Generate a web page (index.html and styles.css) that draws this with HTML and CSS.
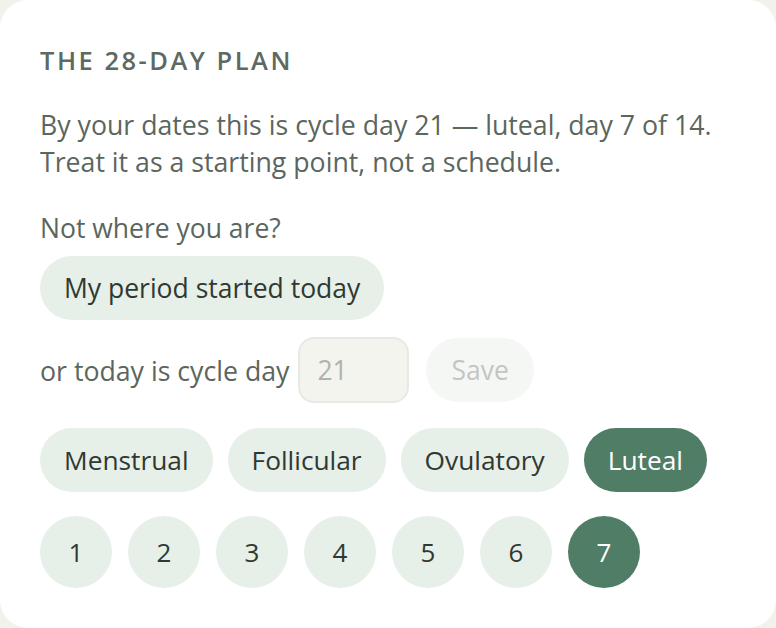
FILE: index.html
```html
<!DOCTYPE html>
<html lang="en">
  <head>
    <meta charset="UTF-8" />
    <meta name="viewport" content="width=device-width, initial-scale=1.0" />
    <title>The 28-day plan</title>
    <link rel="stylesheet" href="styles.css">
  </head>
  <body>
    <div class="plan-card">
      <h2>The 28-day plan</h2>
      <p class="intro">
        By your dates this is cycle day 21 — luteal, day 7 of 14.<br />
        Treat it as a starting point, not a schedule.
      </p>

      <div class="adjust">
        <div class="hint">Not where you are?</div>
        <button class="pill">My period started today</button>
        <div class="day-row">
          <label for="cycle-day">or today is cycle day</label>
          <input id="cycle-day" type="number" placeholder="21" />
          <button class="save" disabled>Save</button>
        </div>
      </div>

      <div class="phases">
        <button class="pill">Menstrual</button>
        <button class="pill">Follicular</button>
        <button class="pill">Ovulatory</button>
        <button class="pill active">Luteal</button>
      </div>

      <div class="days">
        <button class="day">1</button>
        <button class="day">2</button>
        <button class="day">3</button>
        <button class="day">4</button>
        <button class="day">5</button>
        <button class="day">6</button>
        <button class="day active">7</button>
      </div>
    </div>
  </body>
</html>
```

FILE: styles.css
```css
body {
  margin: 0;
  background: #f2f2ed;
  font-family: "Open Sans", "Noto Sans", sans-serif;
  color: #5b665e;
}

.plan-card {
  background: #ffffff;
  border-radius: 28px;
  padding: 42px 40px 40px;
}

h2 {
  margin: 0;
  font-size: 25.5px;
  font-weight: 600;
  line-height: 36px;
  letter-spacing: 2.5px;
  text-transform: uppercase;
  color: #5e6a61;
}

.intro {
  margin: 28px 0 0;
  font-size: 26.7px;
  line-height: 37px;
}

.adjust {
  margin-top: 30px;
}

.hint {
  font-size: 26.5px;
  line-height: 37px;
}

.pill {
  height: 64px;
  padding: 0 24px;
  border: none;
  border-radius: 32px;
  background: #e6efe8;
  color: #2f3932;
  font-family: inherit;
  font-size: 26.5px;
}

.pill.active,
.day.active {
  background: #507d66;
  color: #ffffff;
}

.adjust .pill {
  margin-top: 9px;
}

.day-row {
  display: flex;
  align-items: center;
  margin-top: 17px;
  font-size: 26.7px;
}

.day-row label {
  margin-right: 9px;
}

.day-row input {
  box-sizing: border-box;
  width: 111px;
  height: 66px;
  padding: 0 17px;
  border: 2px solid #e4ebe5;
  border-radius: 16px;
  background: #f4f4ef;
  font-family: inherit;
  font-size: 26.5px;
  color: #5b665e;
}

.day-row input::placeholder {
  color: #aeb3ac;
}

.save {
  height: 64px;
  margin-left: 17px;
  padding: 0 25px;
  border: none;
  border-radius: 32px;
  background: #f5f7f5;
  color: #c2c6c2;
  font-family: inherit;
  font-size: 26.5px;
}

.phases {
  display: flex;
  gap: 15px;
  margin-top: 25px;
}

.phases .pill {
  font-size: 26.3px;
}

.days {
  display: flex;
  gap: 16px;
  margin-top: 24px;
}

.day {
  width: 72px;
  height: 72px;
  padding: 0;
  border: none;
  border-radius: 50%;
  background: #e6efe8;
  color: #2f3932;
  font-family: inherit;
  font-size: 26px;
}
```
